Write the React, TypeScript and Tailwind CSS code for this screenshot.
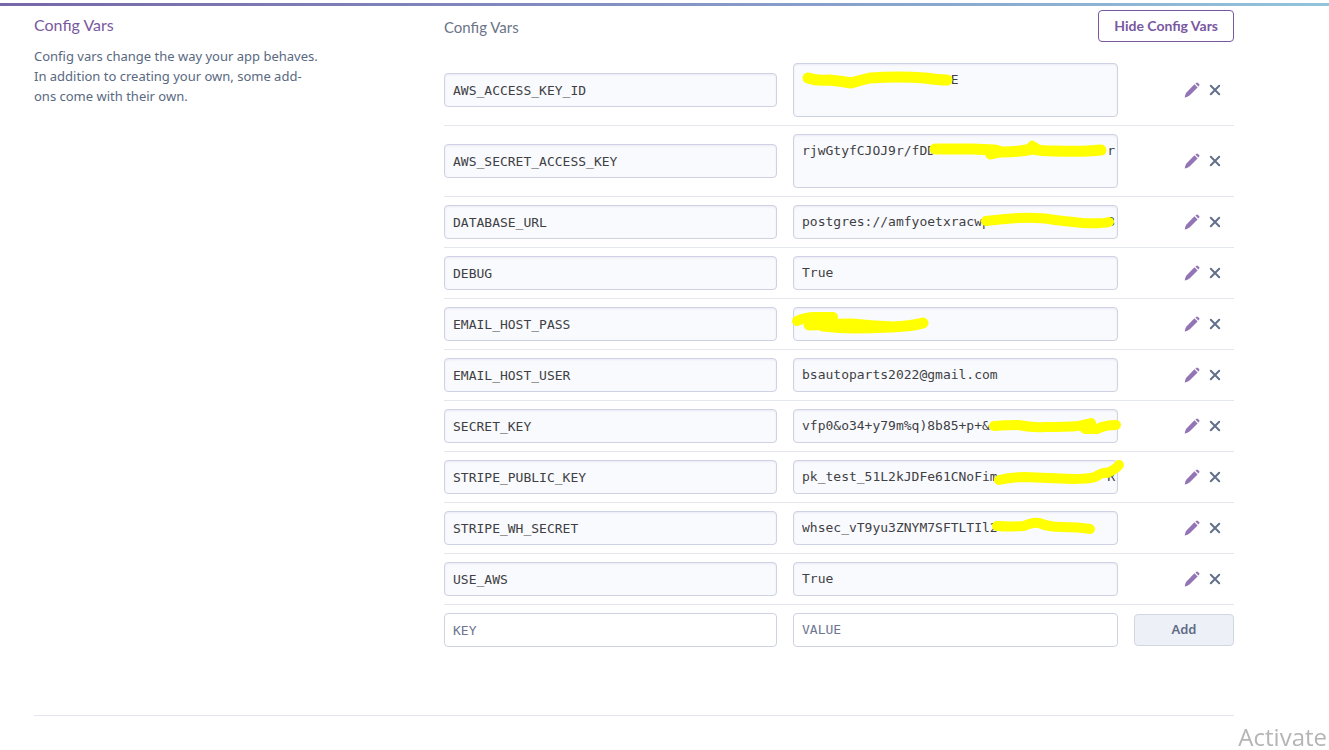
import React from "react";

type ConfigVar = {
  name: string;
  value: string;
  tall?: boolean;
  marks?: { d: string; width: number }[];
};

const configVars: ConfigVar[] = [
  {
    name: "AWS_ACCESS_KEY_ID",
    value: " ".repeat(19) + "E",
    tall: true,
    marks: [
      { d: "M15 15 Q24 18 36 17 Q48 18 58 20 Q68 17 77 15 Q106 13 132 15 Q146 17 154 17", width: 11 },
    ],
  },
  {
    name: "AWS_SECRET_ACCESS_KEY",
    value: "rjwGtyfCJOJ9r/fDD" + " ".repeat(22) + "r",
    tall: true,
    marks: [
      { d: "M142 15 Q165 15 179 15 L202 16 L209 18 Q225 18 240 15 Q248 17 262 17 Q290 18 308 16", width: 11 },
      { d: "M197 21 L206 19", width: 9 },
      { d: "M236 13 L239 10 L244 13", width: 7 },
    ],
  },
  {
    name: "DATABASE_URL",
    value: "postgres://amfyoetxracwp" + " ".repeat(15) + "3",
    marks: [
      { d: "M193 16 Q210 14 225 13 Q246 12 262 15 Q280 17 290 18 Q308 19 316 17", width: 10 },
    ],
  },
  { name: "DEBUG", value: "True" },
  {
    name: "EMAIL_HOST_PASS",
    value: "",
    marks: [
      { d: "M4 14 Q12 10 22 10 T40 10", width: 10 },
      { d: "M16 18 Q38 17 59 17 Q78 19 99 20 Q120 19 130 16", width: 11 },
      { d: "M30 19 Q46 21 62 21 T96 20", width: 11 },
    ],
  },
  { name: "EMAIL_HOST_USER", value: "bsautoparts2022@gmail.com" },
  {
    name: "SECRET_KEY",
    value: "vfp0&o34+y79m%q)8b85+p+&",
    marks: [
      { d: "M201 17 Q212 16 225 16 Q240 19 252 18 Q275 18 285 17 L298 14 L292 20 L304 20 Q312 16 323 16", width: 10 },
    ],
  },
  {
    name: "STRIPE_PUBLIC_KEY",
    value: "pk_test_51L2kJDFe61CNoFim" + " ".repeat(14) + "R",
    marks: [
      { d: "M206 20 Q218 17 232 17 Q255 18 279 19 Q296 19 302 17 Q310 12 314 13 Q322 10 326 5", width: 10 },
    ],
  },
  {
    name: "STRIPE_WH_SECRET",
    value: "whsec_vT9yu3ZNYM7SFTLTIl2",
    marks: [
      { d: "M204 15 Q218 16 231 15 Q240 11 246 12 Q256 16 268 16 Q286 16 297 18", width: 10 },
    ],
  },
  { name: "USE_AWS", value: "True" },
];

const field =
  "block w-full rounded border border-[#cfd2e2] px-2 font-['DejaVu_Sans_Mono',monospace] text-[13px] text-[#3f3f44] outline-none placeholder:text-[#6d7690]";
const filled = "bg-[#f9fafd] shadow-[inset_0_1px_2px_rgba(220,222,238,0.6)]";

function PencilIcon() {
  return (
    <svg viewBox="0 0 16 16" className="size-4" fill="#9374b5" aria-hidden="true">
      <path d="M10.4 2.2 13.6 5.4 5.8 13.2C4.4 14.5 2.4 15.2.7 15.5 1 13.8 1.4 11.6 2.7 10.2Z" />
      <path d="M11.4 1.6 12.5.7Q13.2.2 13.9.9L15.2 2.1Q15.8 2.7 15.2 3.4L14.4 4.5Z" />
    </svg>
  );
}

function CrossIcon() {
  return (
    <svg viewBox="0 0 12 12" className="size-3" fill="none" stroke="#62708a" strokeWidth="2" strokeLinecap="round" aria-hidden="true">
      <path d="M1.8 1.8 10.2 10.2M10.2 1.8 1.8 10.2" />
    </svg>
  );
}

function ConfigRow({ item }: { item: ConfigVar }) {
  return (
    <tr className="border-b border-[#e5e7ee]">
      <td className="py-2 pr-4">
        <input aria-label={`${item.name} key`} readOnly defaultValue={item.name} className={`${field} ${filled} h-[34px]`} />
      </td>
      <td className="py-2 pr-4">
        <div className="relative">
          {item.tall ? (
            <textarea
              aria-label={`${item.name} value`}
              readOnly
              wrap="off"
              defaultValue={item.value}
              className={`${field} ${filled} h-[54px] resize-none overflow-hidden py-2 leading-4`}
            />
          ) : (
            <input aria-label={`${item.name} value`} readOnly defaultValue={item.value} className={`${field} ${filled} h-[34px] pr-0 pb-0.5`} />
          )}
          {item.marks && (
            <svg
              className="pointer-events-none absolute top-0 left-0 h-[34px] w-[325px] overflow-visible"
              fill="none"
              stroke="#ffff00"
              strokeLinecap="round"
              strokeLinejoin="round"
              aria-hidden="true"
            >
              {item.marks.map((mark) => (
                <path key={mark.d} d={mark.d} strokeWidth={mark.width} />
              ))}
            </svg>
          )}
        </div>
      </td>
      <td>
        <div className="flex items-center justify-end gap-[9px] pr-[13px]">
          <button type="button" aria-label={`Edit ${item.name}`}>
            <PencilIcon />
          </button>
          <button type="button" aria-label={`Remove ${item.name}`}>
            <CrossIcon />
          </button>
        </div>
      </td>
    </tr>
  );
}

export default function App() {
  return (
    <div className="bg-white pt-[3px] font-['Lato',sans-serif]">
      <div className="h-[3px] bg-linear-to-r from-[#7667a8] via-[#8494c5] to-[#92c4dc]" />
      <main className="mr-[95px] ml-[34px] border-b border-[#e5e7ee] pt-1 pb-[52px]">
        <div className="flex pb-2">
          <section className="w-[410px] shrink-0">
            <h2 className="pt-[3px] text-base leading-6 text-[#79589f]">Config Vars</h2>
            <p className="w-[288px] pt-[9px] font-['Noto_Sans',sans-serif] text-[13px] leading-5 text-[#596981]">
              Config vars change the way your app behaves. In addition to creating your own, some add-
              <br />
              ons come with their own.
            </p>
          </section>
          <section className="min-w-0 grow">
            <div className="flex h-[45px] items-start justify-between">
              <h3 className="pt-[5px] text-[15px] leading-6 text-[#6b7488]">Config Vars</h3>
              <button
                type="button"
                className="h-8 rounded border border-[#79589f] px-[15px] text-sm font-bold text-[#79589f]"
              >
                Hide Config Vars
              </button>
            </div>
            <table className="w-full table-fixed border-collapse">
              <colgroup>
                <col className="w-[349px]" />
                <col />
                <col className="w-[100px]" />
              </colgroup>
              <tbody>
                {configVars.map((item) => (
                  <ConfigRow key={item.name} item={item} />
                ))}
                <tr>
                  <td className="py-2 pr-4">
                    <input aria-label="New key" placeholder="KEY" className={`${field} h-[34px] bg-white`} />
                  </td>
                  <td className="py-2 pr-4">
                    <input aria-label="New value" placeholder="VALUE" className={`${field} h-[34px] bg-white pb-0.5`} />
                  </td>
                  <td>
                    <button type="button" className="block h-8 w-full rounded border border-[#d3d7e2] bg-[#edf0f7] font-['Noto_Sans',sans-serif] text-[13px] font-semibold text-[#5f6b85]">
                      Add
                    </button>
                  </td>
                </tr>
              </tbody>
            </table>
          </section>
        </div>
      </main>
      <div className="pointer-events-none fixed right-0.5 bottom-px font-['Open_Sans',sans-serif] text-2xl leading-6 text-[#b5b5b5]">
        Activate
      </div>
    </div>
  );
}
